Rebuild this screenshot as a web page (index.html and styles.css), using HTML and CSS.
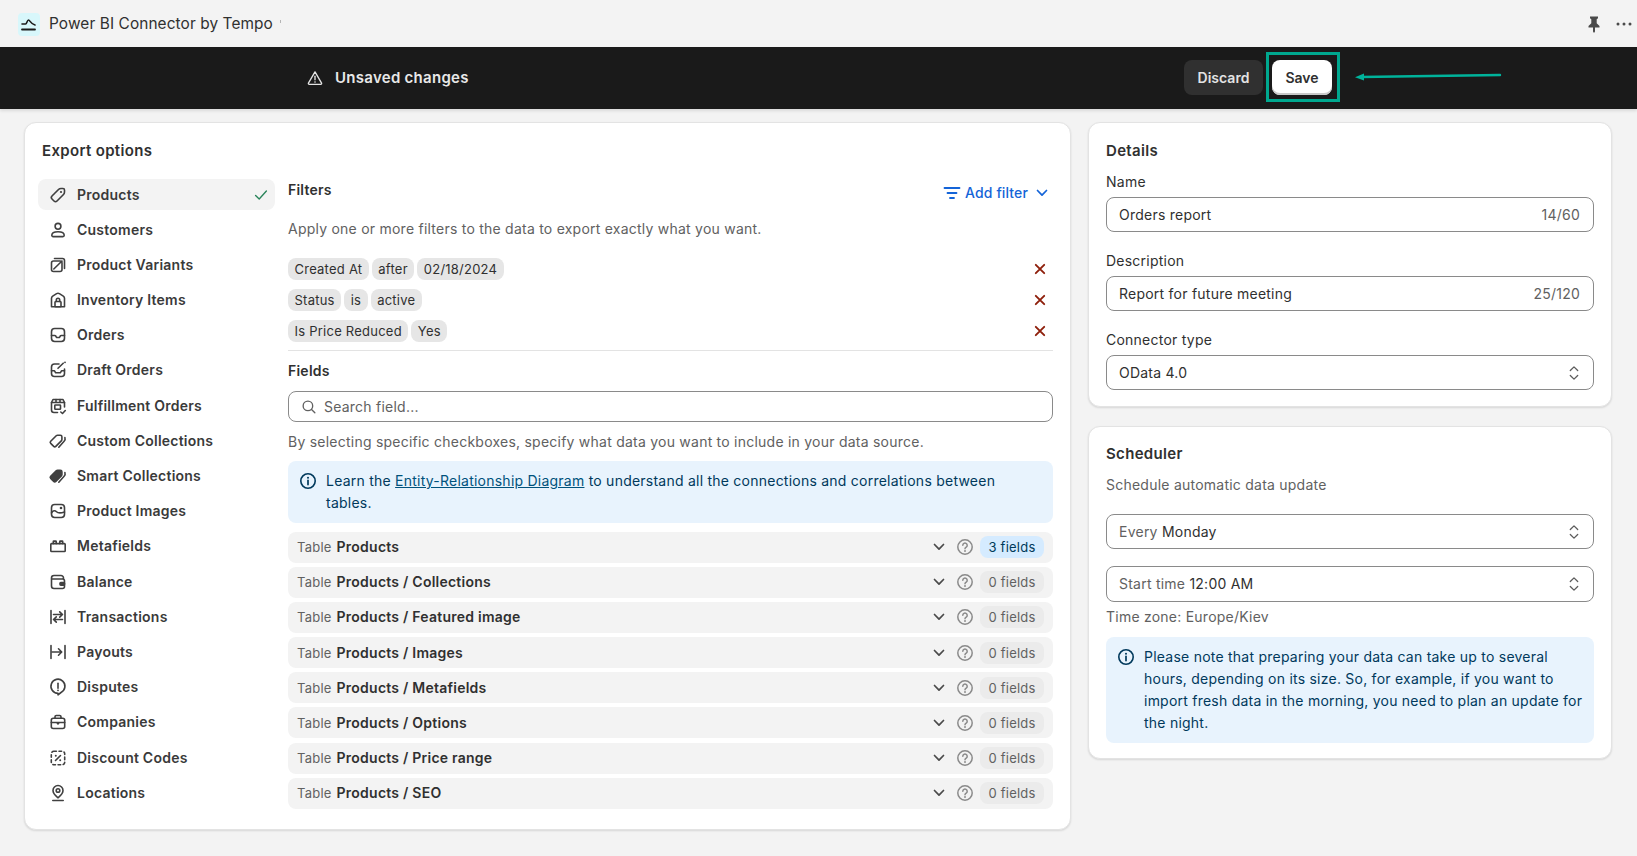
FILE: index.html
```html
<!DOCTYPE html>
<html lang="en">
<head>
<meta charset="utf-8">
<title>Power BI Connector by Tempo</title>
<link rel="stylesheet" href="styles.css">
</head>
<body>
<svg class="sprite" width="0" height="0" aria-hidden="true">
  <symbol id="i-chev" viewBox="0 0 20 20"><path d="M5.500 7.500 10 12.200l4.500-4.700" fill="none" stroke="currentColor" stroke-width="1.700" stroke-linecap="round" stroke-linejoin="round"/></symbol>
  <symbol id="i-help" viewBox="0 0 20 20"><circle cx="10" cy="10" r="7.200" fill="none" stroke="currentColor" stroke-width="1.500"/><path d="M7.800 8.200a2.200 2.200 0 1 1 3.400 1.900c-.8.500-1.200.9-1.200 1.700" fill="none" stroke="currentColor" stroke-width="1.500" stroke-linecap="round"/><circle cx="10" cy="14" r=".95" fill="currentColor"/></symbol>
  <symbol id="i-info" viewBox="0 0 20 20"><circle cx="10" cy="10" r="7.200" fill="none" stroke="currentColor" stroke-width="1.600"/><path d="M10 9.400v4.200" fill="none" stroke="currentColor" stroke-width="1.700" stroke-linecap="round"/><circle cx="10" cy="6.700" r="1" fill="currentColor"/></symbol>
  <symbol id="i-x" viewBox="0 0 14 14"><path d="M2.800 2.800l8.400 8.400M11.200 2.800l-8.400 8.400" fill="none" stroke="currentColor" stroke-width="1.900" stroke-linecap="round"/></symbol>
  <symbol id="i-updown" viewBox="0 0 20 20"><path d="M6.300 7.500 10 3.900l3.700 3.600M6.300 12.500l3.700 3.600 3.700-3.600" fill="none" stroke="currentColor" stroke-width="1.300" stroke-linecap="round" stroke-linejoin="round"/></symbol>
</svg>

<header class="appbar">
  <div class="appbar-left">
    <span class="logo"><svg viewBox="0 0 22 22" width="22" height="22"><path d="M4 11h3.500c1.500 0 1.500-4 3-4 1.500 0 2 4 6.500 5" fill="none" stroke="#1a1a1a" stroke-width="1.600" stroke-linecap="round"/><path d="M4 16.500h13" fill="none" stroke="#1a1a1a" stroke-width="1.800" stroke-linecap="round"/></svg></span>
    <span class="app-title">Power BI Connector by Tempo</span>
    <span class="clip-tick"></span>
  </div>
  <div class="appbar-right">
    <svg class="pin" viewBox="0 0 20 20" width="20" height="20"><path d="M6 2.500h8v1.800l-1.300 1v4l2.800 2.700v1.500h-4.500v4l-1 1.500-1-1.500v-4H4.500V12l2.800-2.700v-4L6 4.300z" fill="#4a4a4a"/></svg>
    <svg class="dots" viewBox="0 0 20 20" width="20" height="20"><circle cx="4" cy="10" r="1.500" fill="#4a4a4a"/><circle cx="10" cy="10" r="1.500" fill="#4a4a4a"/><circle cx="16" cy="10" r="1.500" fill="#4a4a4a"/></svg>
  </div>
</header>

<div class="savebar">
  <div class="save-msg">
    <svg viewBox="0 0 20 20" width="18" height="18"><path d="M10 3.200 17.300 15.600a1 1 0 0 1-.9 1.400H3.600a1 1 0 0 1-.9-1.400z" fill="none" stroke="#e3e3e3" stroke-width="1.500" stroke-linejoin="round"/><path d="M10 8v4" stroke="#e3e3e3" stroke-width="1.500" stroke-linecap="round"/><circle cx="10" cy="14.400" r=".9" fill="#e3e3e3"/></svg>
    <span>Unsaved changes</span>
  </div>
  <div class="save-actions">
    <button class="btn btn-dark" type="button">Discard</button>
    <button class="btn btn-light" type="button">Save</button>
  </div>
  <span class="annot-frame"></span>
  <svg class="annot-arrow" viewBox="0 0 150 12" width="150" height="12"><path d="M6 7 145 5" stroke="#00b39b" stroke-width="2.400" stroke-linecap="round"/><path d="M0 7.200 9 3.600v7z" fill="#00b39b"/></svg>
</div>

<main class="layout">
  <section class="card export">
    <h2 class="card-title">Export options</h2>
    <div class="export-body">
      <nav class="nav">
        <a class="nav-row active">
          <svg class="ni" viewBox="0 0 20 20"><path d="M4 11 10.500 4.500Q11.500 3.500 13 3.500h2Q16.500 3.500 16.500 5v2Q16.500 8.500 15.500 9.500L9 16Q7.500 17.500 6 16L4 14Q2.500 12.500 4 11z"/><circle class="f" cx="13" cy="7" r="1.100"/></svg>
          <span>Products</span>
          <svg class="check" viewBox="0 0 20 20" width="18" height="18"><path d="M4 10.500l4 4 8-9" fill="none" stroke="#29845a" stroke-width="1.500" stroke-linecap="round" stroke-linejoin="round"/></svg>
        </a>
        <a class="nav-row"><svg class="ni" viewBox="0 0 20 20"><circle cx="10" cy="6.300" r="2.900"/><path d="M3.800 15.300c0-2.400 2.800-3.600 6.200-3.600s6.200 1.200 6.200 3.600c0 .8-.6 1.300-1.300 1.300H5.100c-.7 0-1.300-.5-1.300-1.300z"/></svg><span>Customers</span></a>
        <a class="nav-row"><svg class="ni" viewBox="0 0 20 20"><rect x="3.500" y="6" width="10.500" height="10.500" rx="2"/><path d="M6.500 3.500h8a2 2 0 0 1 2 2v8"/><path d="M5.800 14 14 6"/></svg><span>Product Variants</span></a>
        <a class="nav-row"><svg class="ni" viewBox="0 0 20 20"><path d="M3.500 16.800V8.300c0-1 .4-1.600 1.200-2.200l3.900-2.500c.9-.5 1.900-.5 2.800 0l3.900 2.500c.8.600 1.200 1.200 1.200 2.200v8.500z"/><rect x="7" y="11.500" width="6" height="5.300" rx=".8"/><path d="M8.300 11.500V10a1.700 1.700 0 0 1 3.400 0v1.500"/></svg><span>Inventory Items</span></a>
        <a class="nav-row"><svg class="ni" viewBox="0 0 20 20"><rect x="3.500" y="3.500" width="13" height="13" rx="3.200"/><path d="M3.500 10.500h3.300c.4 0 .7.200.9.500l.6 1c.2.300.5.500.9.500h1.600c.4 0 .7-.2.900-.5l.6-1c.2-.3.500-.5.900-.5h3.300"/></svg><span>Orders</span></a>
        <a class="nav-row"><svg class="ni" viewBox="0 0 20 20"><path d="M11 4H6.500a3 3 0 0 0-3 3v6.500a3 3 0 0 0 3 3h7a3 3 0 0 0 3-3V9"/><path d="M3.500 10.800h3l1.200 2h4.600l1.200-2h3"/><path d="M10 8.300 15.200 3.200"/><circle class="f" cx="17" cy="2.300" r=".9"/></svg><span>Draft Orders</span></a>
        <a class="nav-row"><svg class="ni" viewBox="0 0 20 20"><path d="M9.500 16.500H6a2.500 2.500 0 0 1-2.500-2.500V6.500l1.500-3h10l1.500 3V11"/><path d="M3.500 6.500h13M8 3.500v3M12 3.500v3"/><rect x="6.800" y="9" width="5.700" height="4.300" rx=".6"/><path d="M12.800 16l1.700 1.500 2.800-3"/></svg><span>Fulfillment Orders</span></a>
        <a class="nav-row"><svg class="ni" viewBox="0 0 20 20"><path d="M2.700 10.300 8.200 4.800c.4-.4.800-.6 1.300-.6h2.800c.9 0 1.600.7 1.600 1.600v2.800c0 .5-.2.900-.6 1.300l-5.500 5.500a1.500 1.500 0 0 1-2.100 0l-3-3a1.500 1.500 0 0 1 0-2.100z"/><path d="M16.900 6.500c.5 1.500.2 2.800-.8 3.800l-5.300 5.900"/></svg><span>Custom Collections</span></a>
        <a class="nav-row"><svg class="ni" viewBox="0 0 20 20"><path class="fill" d="M2.700 10.300 8.200 4.800c.4-.4.800-.6 1.300-.6h2.800c.9 0 1.600.7 1.600 1.600v2.800c0 .5-.2.900-.6 1.300l-5.500 5.500a1.500 1.500 0 0 1-2.100 0l-3-3a1.500 1.500 0 0 1 0-2.100z"/><path d="M16.900 6.500c.5 1.500.2 2.800-.8 3.800l-5.300 5.900"/></svg><span>Smart Collections</span></a>
        <a class="nav-row"><svg class="ni" viewBox="0 0 20 20"><rect x="3.500" y="3.500" width="13" height="13" rx="3.200"/><path d="M3.500 12c1.500-2.800 3.500-2.800 5-1.300s3 1.900 8 .3"/><circle class="f" cx="13" cy="7" r="1.300"/></svg><span>Product Images</span></a>
        <a class="nav-row"><svg class="ni" viewBox="0 0 20 20"><rect x="2.800" y="7.600" width="14.400" height="7.900" rx=".8"/><path d="M5.300 7.600V5.600c0-.3.200-.5.500-.5h1.900c.3 0 .5.200.5.500v2M11.800 7.600V5.600c0-.3.200-.5.500-.5h1.900c.3 0 .5.200.5.500v2"/></svg><span>Metafields</span></a>
        <a class="nav-row"><svg class="ni" viewBox="0 0 20 20"><path d="M15.500 7V6a2.500 2.500 0 0 0-2.500-2.500H6A2.500 2.500 0 0 0 3.500 6v8A2.500 2.500 0 0 0 6 16.500h8.500a2 2 0 0 0 2-2V9a2 2 0 0 0-2-2H3.500"/><rect class="fill" x="12" y="10.500" width="4.500" height="2.600" rx=".8"/></svg><span>Balance</span></a>
        <a class="nav-row"><svg class="ni" viewBox="0 0 20 20"><path d="M3 3.500v13M17 3.500v13"/><path d="M5.500 7.500h9M11.700 4.800l2.800 2.700-2.800 2.700"/><path d="M14.500 12.500h-9M8.300 9.800l-2.800 2.700 2.800 2.700"/></svg><span>Transactions</span></a>
        <a class="nav-row"><svg class="ni" viewBox="0 0 20 20"><path d="M3 3.500v13M17 3.500v13"/><path d="M4 10h9.500M10.500 6.800l3.200 3.200-3.200 3.200"/></svg><span>Payouts</span></a>
        <a class="nav-row"><svg class="ni" viewBox="0 0 20 20"><path d="M10 16.200a7 7 0 1 1 3-.7l-3 2.300z"/><path d="M10 6.200v5"/><circle class="f" cx="10" cy="13.300" r=".9"/></svg><span>Disputes</span></a>
        <a class="nav-row"><svg class="ni" viewBox="0 0 20 20"><rect x="3.300" y="6.200" width="13.400" height="10.300" rx="2"/><path d="M7 6V4.800c0-.7.600-1.300 1.300-1.300h3.400c.7 0 1.300.6 1.300 1.300V6"/><path d="M3.300 10.500h13.400M8.800 10.500l1.200 1.400 1.200-1.400"/></svg><span>Companies</span></a>
        <a class="nav-row"><svg class="ni" viewBox="0 0 20 20"><rect x="3.300" y="3.300" width="13.400" height="13.400" rx="2.500" stroke-dasharray="2.600 2.600"/><path d="M12.500 7.500l-5 5"/><circle class="f" cx="7.800" cy="7.800" r="1"/><circle class="f" cx="12.200" cy="12.200" r="1"/></svg><span>Discount Codes</span></a>
        <a class="nav-row"><svg class="ni" viewBox="0 0 20 20"><path d="M10 14.800c-3-2.400-5-4.500-5-7.300a5 5 0 0 1 10 0c0 2.800-2 4.900-5 7.300z"/><circle cx="10" cy="7.500" r="1.800"/><path d="M4.800 17.500h10.400"/></svg><span>Locations</span></a>
      </nav>

      <div class="content">
        <div class="filters-head">
          <h3 class="sub-title">Filters</h3>
          <button class="add-filter" type="button">
            <svg viewBox="0 0 20 20" width="20" height="20"><path d="M2.500 5h15M5.500 10h9M8 15h4" fill="none" stroke="currentColor" stroke-width="1.800" stroke-linecap="round"/></svg>
            <span>Add filter</span>
            <svg class="af-chev" width="20" height="20"><use href="#i-chev"/></svg>
          </button>
        </div>
        <p class="muted">Apply one or more filters to the data to export exactly what you want.</p>
        <div class="filter-list">
          <div class="filter-row"><span class="tag">Created At</span><span class="tag">after</span><span class="tag">02/18/2024</span><svg class="x"><use href="#i-x"/></svg></div>
          <div class="filter-row"><span class="tag">Status</span><span class="tag">is</span><span class="tag">active</span><svg class="x"><use href="#i-x"/></svg></div>
          <div class="filter-row"><span class="tag">Is Price Reduced</span><span class="tag">Yes</span><svg class="x"><use href="#i-x"/></svg></div>
        </div>
        <hr class="sep">
        <h3 class="sub-title fields-title">Fields</h3>
        <div class="search">
          <svg viewBox="0 0 20 20" width="18" height="18"><circle cx="8.800" cy="8.800" r="5.300" fill="none" stroke="#616161" stroke-width="1.500"/><path d="M12.800 12.800l3.700 3.700" stroke="#616161" stroke-width="1.500" stroke-linecap="round"/></svg>
          <span>Search field...</span>
        </div>
        <p class="muted by-sel">By selecting specific checkboxes, specify what data you want to include in your data source.</p>
        <div class="banner banner-wide">
          <svg class="bi"><use href="#i-info"/></svg>
          <p>Learn the <a class="link">Entity-Relationship Diagram</a> to understand all the connections and correlations between tables.</p>
        </div>
        <div class="tables">
          <div class="t-row"><span class="t-label">Table</span><b>Products</b><span class="t-end"><svg class="t-chev"><use href="#i-chev"/></svg><svg class="t-help"><use href="#i-help"/></svg><span class="count on">3 fields</span></span></div>
          <div class="t-row"><span class="t-label">Table</span><b>Products / Collections</b><span class="t-end"><svg class="t-chev"><use href="#i-chev"/></svg><svg class="t-help"><use href="#i-help"/></svg><span class="count">0 fields</span></span></div>
          <div class="t-row"><span class="t-label">Table</span><b>Products / Featured image</b><span class="t-end"><svg class="t-chev"><use href="#i-chev"/></svg><svg class="t-help"><use href="#i-help"/></svg><span class="count">0 fields</span></span></div>
          <div class="t-row"><span class="t-label">Table</span><b>Products / Images</b><span class="t-end"><svg class="t-chev"><use href="#i-chev"/></svg><svg class="t-help"><use href="#i-help"/></svg><span class="count">0 fields</span></span></div>
          <div class="t-row"><span class="t-label">Table</span><b>Products / Metafields</b><span class="t-end"><svg class="t-chev"><use href="#i-chev"/></svg><svg class="t-help"><use href="#i-help"/></svg><span class="count">0 fields</span></span></div>
          <div class="t-row"><span class="t-label">Table</span><b>Products / Options</b><span class="t-end"><svg class="t-chev"><use href="#i-chev"/></svg><svg class="t-help"><use href="#i-help"/></svg><span class="count">0 fields</span></span></div>
          <div class="t-row"><span class="t-label">Table</span><b>Products / Price range</b><span class="t-end"><svg class="t-chev"><use href="#i-chev"/></svg><svg class="t-help"><use href="#i-help"/></svg><span class="count">0 fields</span></span></div>
          <div class="t-row"><span class="t-label">Table</span><b>Products / SEO</b><span class="t-end"><svg class="t-chev"><use href="#i-chev"/></svg><svg class="t-help"><use href="#i-help"/></svg><span class="count">0 fields</span></span></div>
        </div>
      </div>
    </div>
  </section>

  <aside class="side">
    <section class="card details">
      <h2 class="card-title">Details</h2>
      <label class="lbl lbl-first">Name</label>
      <div class="field"><span>Orders report</span><span class="cnt">14/60</span></div>
      <label class="lbl">Description</label>
      <div class="field"><span>Report for future meeting</span><span class="cnt">25/120</span></div>
      <label class="lbl">Connector type</label>
      <div class="field"><span>OData 4.0</span><svg class="ud"><use href="#i-updown"/></svg></div>
    </section>
    <section class="card sched">
      <h2 class="card-title">Scheduler</h2>
      <p class="muted sched-sub">Schedule automatic data update</p>
      <div class="field f-one"><span><span class="pre">Every</span> Monday</span><svg class="ud"><use href="#i-updown"/></svg></div>
      <div class="field f-two"><span><span class="pre">Start time</span> 12:00 AM</span><svg class="ud"><use href="#i-updown"/></svg></div>
      <p class="muted tz">Time zone: Europe/Kiev</p>
      <div class="banner banner-side">
        <svg class="bi"><use href="#i-info"/></svg>
        <p>Please note that preparing your data can take up to several hours, depending on its size. So, for example, if you want to import fresh data in the morning, you need to plan an update for the night.</p>
      </div>
    </section>
  </aside>
</main>
</body>
</html>
```
FILE: styles.css
```css
* { box-sizing: border-box; }
html, body { margin: 0; padding: 0; }
body {
  width: 1637px;
  min-height: 856px;
  overflow: hidden;
  background: #f3f3f3;
  color: #303030;
  font-family: Inter, "Noto Sans", sans-serif;
  font-size: 14px;
  line-height: 20px;
  letter-spacing: .235px;
}
.sprite { position: absolute; }
h2, h3, p { margin: 0; }

.appbar {
  height: 47px;
  display: flex;
  align-items: center;
  justify-content: space-between;
  padding: 1px 3px 0 18px;
  background: #f3f3f3;
}
.appbar-left { display: flex; align-items: center; }
.logo {
  width: 22px;
  height: 23px;
  border-radius: 4px;
  background: #d8f7fb;
  display: flex;
}
.app-title { margin-left: 9px; font-size: 15.4px; letter-spacing: .1px; color: #303030; }
.clip-tick { width: 1px; height: 3px; margin: -6px 0 0 7px; background: #b5b5b5; }
.appbar-right { display: flex; align-items: center; gap: 10px; }

.savebar {
  position: relative;
  height: 62px;
  background: #1a1a1a;
  box-shadow: 0 2px 3px rgba(0,0,0,.1);
  display: flex;
  align-items: center;
  justify-content: space-between;
  padding: 0 305px 0 306px;
}
.save-msg { display: flex; align-items: center; gap: 11px; color: #e8e8e8; font-weight: 600; font-size: 15px; letter-spacing: .28px; }
.save-actions { display: flex; gap: 9px; margin-bottom: 2px; }
.btn {
  height: 35px;
  border: 0;
  border-radius: 8px;
  font: 600 14px Inter, sans-serif;
}
.btn-dark { width: 79px; background: #303030; color: #e3e3e3; }
.btn-light { width: 60px; background: #fff; color: #303030; box-shadow: inset 0 -2px 0 #c9c9c9; }
.annot-frame {
  position: absolute;
  left: 1266px;
  top: 5px;
  width: 74px;
  height: 50px;
  border: 3px solid #00a88f;
}
.annot-arrow { position: absolute; left: 1355px; top: 23px; }

.layout {
  display: grid;
  grid-template-columns: 1047px 524px;
  column-gap: 17px;
  align-items: start;
  padding: 13px 0 0 24px;
}
.card {
  background: #fff;
  border: 1px solid #e3e3e3;
  border-radius: 12px;
  box-shadow: 0 1px 2px rgba(0,0,0,.12);
}
.card-title { font-size: 15px; line-height: 20px; font-weight: 600; color: #303030; letter-spacing: .33px; }

.export { padding: 18px 17px 20px 13px; }
.export .card-title { margin-left: 4px; }
.export-body {
  display: grid;
  grid-template-columns: 237px 765px;
  column-gap: 13px;
  margin-top: 18px;
}
.nav { display: flex; flex-direction: column; gap: 4.2px; }
.nav-row {
  height: 31px;
  display: flex;
  align-items: center;
  gap: 9px;
  padding: 0 5px 0 10px;
  border-radius: 8px;
  font-weight: 600;
  font-size: 14px;
  color: #3a3a3a;
}
.nav-row.active { background: #f3f3f3; }
.check { margin-left: auto; }
.ni {
  width: 20px;
  height: 20px;
  flex: none;
  fill: none;
  stroke: #404040;
  stroke-width: 1.600;
  stroke-linecap: round;
  stroke-linejoin: round;
}
.ni .f { fill: #404040; stroke: none; }
.ni .fill { fill: #404040; }

.content { min-width: 0; }
.filters-head { height: 40px; display: flex; justify-content: space-between; align-items: flex-start; }
.sub-title { font-size: 14px; line-height: 22px; font-weight: 600; color: #303030; }
.add-filter {
  display: flex;
  align-items: center;
  gap: 3px;
  margin: 4px 1px 0 0;
  padding: 0;
  border: 0;
  background: none;
  color: #1464d8;
  font: 500 14px/20px Inter, sans-serif;
  letter-spacing: .12px;
}
.af-chev { margin-left: 1px; }
.muted { color: #616161; }
.filter-list { display: flex; flex-direction: column; gap: 9px; margin-top: 19px; }
.filter-row { display: flex; align-items: center; gap: 3px; height: 22px; position: relative; }
.tag {
  height: 22px;
  padding: 0 6.500px;
  display: flex;
  align-items: center;
  border-radius: 8px;
  background: #e6e6e6;
  font-size: 13px;
  color: #303030;
}
.x { width: 14px; height: 14px; margin-left: auto; margin-right: 6px; color: #8e1f0b; }
.sep { height: 1px; margin: 8px 0 0; border: 0; background: #e3e3e3; }
.fields-title { margin-top: 10px; line-height: 20px; }
.search {
  height: 31px;
  margin-top: 10px;
  padding: 0 11px;
  display: flex;
  align-items: center;
  gap: 6px;
  border: 1px solid #8a8a8a;
  border-radius: 8px;
  color: #616161;
}
.by-sel { margin-top: 10px; }
.banner {
  display: flex;
  border-radius: 8px;
  background: #e8f3fd;
  color: #00395c;
  line-height: 22px;
}
.banner-wide { margin-top: 9px; padding: 9px 40px 9px 10px; gap: 8px; }
.bi { width: 20px; height: 20px; flex: none; margin-top: 1px; color: #00395c; }
.link { color: #00527c; text-decoration: underline; }
.tables { display: flex; flex-direction: column; gap: 4.2px; margin-top: 8.500px; }
.t-row {
  height: 31px;
  display: flex;
  align-items: center;
  padding: 0 9px;
  border-radius: 8px;
  background: #f3f3f3;
}
.t-row b { margin-left: 5px; font-weight: 600; color: #303030; }
.t-label { font-size: 13px; color: #616161; }
.t-end { margin-left: auto; display: flex; align-items: center; }
.t-chev { width: 20px; height: 20px; color: #4a4a4a; }
.t-help { width: 20px; height: 20px; margin-left: 6px; color: #8a8a8a; }
.count {
  width: 64px;
  height: 22px;
  margin-left: 5px;
  display: flex;
  align-items: center;
  justify-content: center;
  border-radius: 8px;
  background: #ebebeb;
  color: #616161;
  font-size: 13px;
}
.count.on { background: #d5ebff; color: #003a5a; }

.side { display: flex; flex-direction: column; gap: 19px; }
.details { padding: 18px 17px 17px; height: 285px; }
.sched { padding: 17px 17px 17px; height: 333px; }
.lbl { display: block; margin-top: 19px; height: 20px; }
.lbl-first { margin-top: 1px; padding-top: 10px; height: 30px; }
.field {
  height: 35px;
  margin-top: 5px;
  padding: 0 13px 0 12px;
  display: flex;
  align-items: center;
  justify-content: space-between;
  border: 1px solid #8a8a8a;
  border-radius: 8px;
  color: #303030;
}
.cnt, .pre { color: #616161; }
.ud { width: 20px; height: 20px; margin-right: -4px; color: #5c5c5c; }
.sched-sub { margin-top: 11px; }
.f-one { margin-top: 19px; }
.f-two { margin-top: 17px; height: 36px; }
.tz { margin-top: 5px; }
.banner-side { margin-top: 10px; padding: 9px 6px 9px 10px; gap: 8px; }
```
